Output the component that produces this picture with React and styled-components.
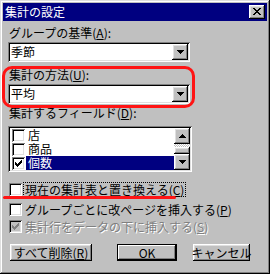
import React from 'react'
import styled, { createGlobalStyle } from 'styled-components'

const GlobalStyle = createGlobalStyle`
  html, body { margin: 0; padding: 0; background: #c0c0c0; }
  * { box-sizing: border-box; }
  body { font-family: "Noto Sans CJK JP", "Noto Sans", sans-serif; font-size: 12px; }
`

const raised = `inset -1px -1px #000, inset 1px 1px #fff, inset -2px -2px #808080, inset 2px 2px #dfdfdf`
const sunken = `inset 1px 1px #808080, inset -1px -1px #fff, inset 2px 2px #000, inset -2px -2px #dfdfdf`

const Window = styled.div`
  width: 270px;
  height: 274px;
  background: #c0c0c0;
  padding: 3px;
  box-shadow: inset -1px -1px #000, inset 1px 1px #dfdfdf, inset -2px -2px #808080, inset 2px 2px #fff;
  display: flex;
  flex-direction: column;
`

const TitleBar = styled.div`
  height: 18px;
  background: #000080;
  color: #fff;
  display: flex;
  align-items: center;
  justify-content: space-between;
  padding: 0 2px 0 2px;
`

const Title = styled.span`
  font-size: 12px;
  line-height: 14px;
`

const CloseButton = styled.div`
  width: 16px;
  height: 14px;
  background: #c0c0c0;
  box-shadow: ${raised};
  display: flex;
  align-items: center;
  justify-content: center;
  padding-bottom: 1px;
`

const Body = styled.div`
  display: flex;
  flex-direction: column;
  padding: 5px 5px 0 5px;
  color: #000;
`

const Label = styled.div`
  height: 14px;
  line-height: 14px;
  padding-left: 1px;
  margin-top: ${p => p.$top || 0}px;
  white-space: nowrap;
`

const Key = styled.span`
  text-decoration: underline;
  text-underline-offset: 1px;
`

const Combo = styled.div`
  margin-top: 2px;
  width: 182px;
  height: 20px;
  background: #fff;
  box-shadow: ${sunken};
  padding: 2px;
  display: flex;
  align-items: center;
`

const ComboText = styled.span`
  flex: 1;
  padding-left: 1px;
  line-height: 14px;
`

const ArrowButton = styled.div`
  width: 16px;
  height: 16px;
  background: #c0c0c0;
  box-shadow: ${raised};
  display: flex;
  align-items: center;
  justify-content: center;
`

const Highlighted = styled.div`
  position: relative;
  width: 182px;
  margin-top: 6px;
  &::after {
    content: '';
    position: absolute;
    top: -2px;
    left: -6px;
    right: -5px;
    bottom: -4px;
    border: 3px solid #ff1414;
    border-radius: 10px;
    pointer-events: none;
  }
`

const ListBox = styled.div`
  margin-top: 6px;
  width: 184px;
  height: 46px;
  background: #fff;
  box-shadow: ${sunken};
  padding: 2px;
  display: flex;
`

const Items = styled.div`
  flex: 1;
  display: flex;
  flex-direction: column;
`

const ListRow = styled.div`
  height: 14px;
  display: flex;
  align-items: center;
  padding-left: 2px;
`

const ItemText = styled.span`
  flex: 1;
  height: 14px;
  line-height: 14px;
  margin-left: 1px;
  padding-left: 2px;
  background: ${p => (p.$selected ? '#000080' : 'transparent')};
  color: ${p => (p.$selected ? '#fff' : '#000')};
`

const Box = styled.div`
  width: 13px;
  height: 13px;
  flex: none;
  background: ${p => (p.$disabled ? '#c0c0c0' : '#fff')};
  box-shadow: ${sunken};
  display: flex;
  align-items: center;
  justify-content: center;
`

const ScrollBar = styled.div`
  width: 16px;
  display: flex;
  flex-direction: column;
`

const Track = styled.div`
  flex: 1;
  display: flex;
  flex-direction: column;
  background-color: #fff;
  background-image: repeating-conic-gradient(#c0c0c0 0 25%, #fff 0 50%);
  background-size: 2px 2px;
`

const Thumb = styled.div`
  margin-top: auto;
  height: 7px;
  background: #c0c0c0;
  box-shadow: ${raised};
`

const OptionRow = styled.div`
  position: relative;
  height: 17px;
  display: flex;
  align-items: center;
  padding-left: 1px;
  margin-top: ${p => p.$top || 0}px;
  color: ${p => (p.$disabled ? '#808080' : '#000')};
  text-shadow: ${p => (p.$disabled ? '1px 1px 0 #fff' : 'none')};
  ${p => p.$marked && `
    &::after {
      content: '';
      position: absolute;
      left: -5px;
      top: 15px;
      width: 173px;
      height: 3px;
      border-radius: 2px;
      background: #ff1414;
    }
  `}
`

const OptionText = styled.span`
  margin-left: 2px;
  padding: 0 1px;
  line-height: 13px;
  white-space: nowrap;
  outline: ${p => (p.$focused ? '1px dotted #000' : 'none')};
`

const ButtonRow = styled.div`
  display: flex;
  margin-top: 9px;
  padding-left: 2px;
`

const Button = styled.div`
  width: ${p => p.$w}px;
  height: 17px;
  margin-left: ${p => p.$gap || 0}px;
  background: #c0c0c0;
  box-shadow: ${p => (p.$default ? `inset 0 0 0 1px #000, inset -2px -2px #000, inset 2px 2px #fff, inset -3px -3px #808080` : raised)};
  display: flex;
  align-items: center;
  justify-content: center;
  line-height: 14px;
  white-space: nowrap;
`

function Check({ color = '#000' }) {
  const px = [
    [6, 0], [5, 1], [6, 1], [0, 2], [4, 2], [5, 2], [6, 2],
    [0, 3], [1, 3], [3, 3], [4, 3], [5, 3], [0, 4], [1, 4], [2, 4], [3, 4], [4, 4],
    [1, 5], [2, 5], [3, 5], [2, 6],
  ]
  return (
    <svg width="7" height="7" viewBox="0 0 7 7" shapeRendering="crispEdges">
      {px.map(([x, y]) => <rect key={`${x}-${y}`} x={x} y={y} width="1" height="1" fill={color} />)}
    </svg>
  )
}

function Triangle({ up }) {
  return (
    <svg width="7" height="4" viewBox="0 0 7 4" shapeRendering="crispEdges">
      <path d={up ? 'M3 0h1v1h1v1h1v1h1v1H0V3h1V2h1V1h1z' : 'M0 0h7v1H6v1H5v1H4v1H3V3H2V2H1V1H0z'} fill="#000" />
    </svg>
  )
}

function CloseGlyph() {
  return (
    <svg width="8" height="7" viewBox="0 0 8 7" shapeRendering="crispEdges">
      <path d="M0 0h2v1h1v1h2V1h1V0h2v1H7v1H6v1H5v1h1v1h1v1h1v1H6V6H5V5H3v1H2v1H0V6h1V5h1V4h1V3H2V2H1V1H0z" fill="#000" />
    </svg>
  )
}

const fields = [
  { name: '店', checked: false },
  { name: '商品', checked: false },
  { name: '個数', checked: true, selected: true },
]

export default function App() {
  return (
    <>
      <GlobalStyle />
      <Window>
        <TitleBar>
          <Title>集計の設定</Title>
          <CloseButton><CloseGlyph /></CloseButton>
        </TitleBar>
        <Body>
          <Label>グループの基準(<Key>A</Key>):</Label>
          <Combo>
            <ComboText>季節</ComboText>
            <ArrowButton><Triangle /></ArrowButton>
          </Combo>

          <Highlighted>
            <Label>集計の方法(<Key>U</Key>):</Label>
            <Combo>
              <ComboText>平均</ComboText>
              <ArrowButton><Triangle /></ArrowButton>
            </Combo>
          </Highlighted>

          <Label $top={2}>集計するフィールド(<Key>D</Key>):</Label>
          <ListBox>
            <Items>
              {fields.map(f => (
                <ListRow key={f.name}>
                  <Box>{f.checked && <Check />}</Box>
                  <ItemText $selected={f.selected}>{f.name}</ItemText>
                </ListRow>
              ))}
            </Items>
            <ScrollBar>
              <ArrowButton><Triangle up /></ArrowButton>
              <Track><Thumb /></Track>
              <ArrowButton><Triangle /></ArrowButton>
            </ScrollBar>
          </ListBox>

          <OptionRow $top={9} $marked>
            <Box />
            <OptionText $focused>現在の集計表と置き換える(<Key>C</Key>)</OptionText>
          </OptionRow>
          <OptionRow $top={3}>
            <Box />
            <OptionText>グループごとに改ページを挿入する(<Key>P</Key>)</OptionText>
          </OptionRow>
          <OptionRow $disabled>
            <Box $disabled><Check color="#808080" /></Box>
            <OptionText>集計行をデータの下に挿入する(<Key>S</Key>)</OptionText>
          </OptionRow>

          <ButtonRow>
            <Button $w={82}>すべて削除(<Key>R</Key>)</Button>
            <Button $w={60} $gap={25} $default>OK</Button>
            <Button $w={57} $gap={16}>キャンセル</Button>
          </ButtonRow>
        </Body>
      </Window>
    </>
  )
}
